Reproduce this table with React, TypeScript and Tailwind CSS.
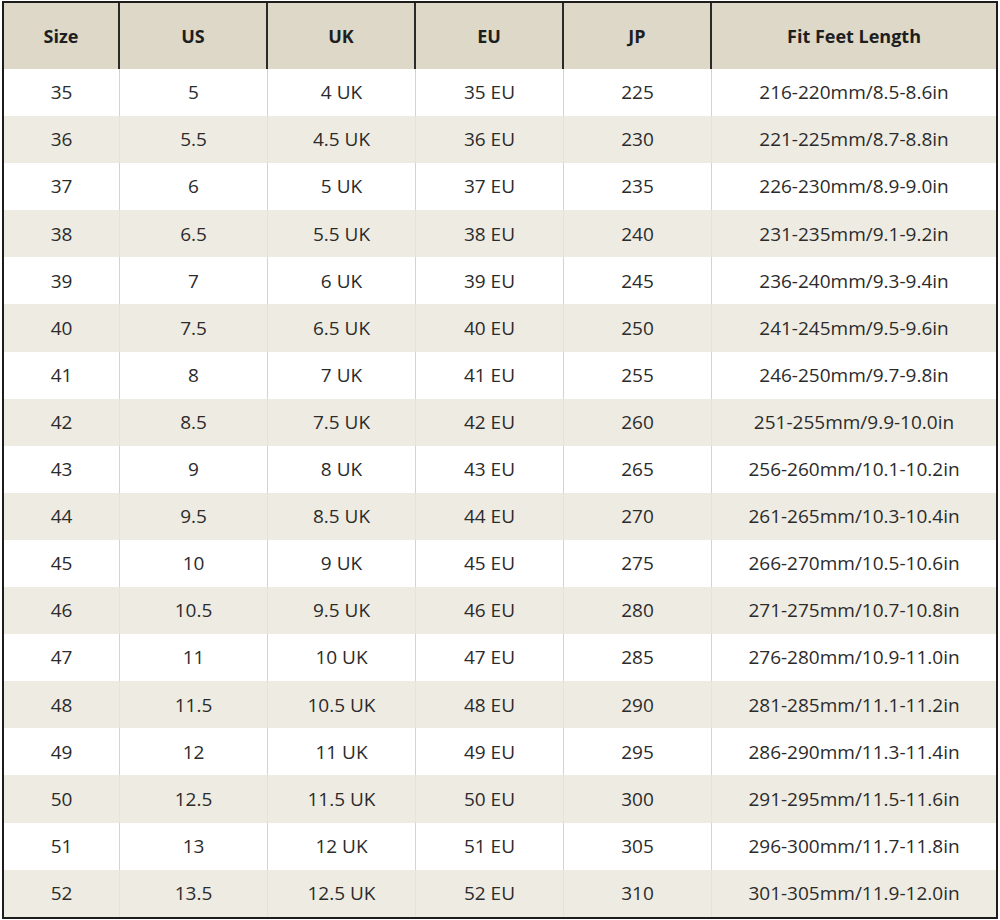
import React from "react";

const rows: string[][] = [
  ["35", "5", "4 UK", "35 EU", "225", "216-220mm/8.5-8.6in"],
  ["36", "5.5", "4.5 UK", "36 EU", "230", "221-225mm/8.7-8.8in"],
  ["37", "6", "5 UK", "37 EU", "235", "226-230mm/8.9-9.0in"],
  ["38", "6.5", "5.5 UK", "38 EU", "240", "231-235mm/9.1-9.2in"],
  ["39", "7", "6 UK", "39 EU", "245", "236-240mm/9.3-9.4in"],
  ["40", "7.5", "6.5 UK", "40 EU", "250", "241-245mm/9.5-9.6in"],
  ["41", "8", "7 UK", "41 EU", "255", "246-250mm/9.7-9.8in"],
  ["42", "8.5", "7.5 UK", "42 EU", "260", "251-255mm/9.9-10.0in"],
  ["43", "9", "8 UK", "43 EU", "265", "256-260mm/10.1-10.2in"],
  ["44", "9.5", "8.5 UK", "44 EU", "270", "261-265mm/10.3-10.4in"],
  ["45", "10", "9 UK", "45 EU", "275", "266-270mm/10.5-10.6in"],
  ["46", "10.5", "9.5 UK", "46 EU", "280", "271-275mm/10.7-10.8in"],
  ["47", "11", "10 UK", "47 EU", "285", "276-280mm/10.9-11.0in"],
  ["48", "11.5", "10.5 UK", "48 EU", "290", "281-285mm/11.1-11.2in"],
  ["49", "12", "11 UK", "49 EU", "295", "286-290mm/11.3-11.4in"],
  ["50", "12.5", "11.5 UK", "50 EU", "300", "291-295mm/11.5-11.6in"],
  ["51", "13", "12 UK", "51 EU", "305", "296-300mm/11.7-11.8in"],
  ["52", "13.5", "12.5 UK", "52 EU", "310", "301-305mm/11.9-12.0in"],
];

const headers = ["Size", "US", "UK", "EU", "JP", "Fit Feet Length"];

const cols = "grid grid-cols-[116px_148px_148px_148px_148px_1fr]";

export default function App() {
  return (
    <div className="w-[1000px] h-[920px] bg-white pt-[1px] pl-[2px] font-['Open_Sans',sans-serif]">
      <div className="w-[996px] border-2 border-[#1c1c1c]">
        {/* header */}
        <div className={`${cols} h-[66px] bg-[#ddd8c8]`}>
          {headers.map((h, i) => (
            <div
              key={h}
              className={
                "flex items-center justify-center text-[18px] font-bold text-[#1e1e1e] " +
                (i < headers.length - 1 ? "border-r-2 border-[#2a2a2a]" : "")
              }
            >
              {h}
            </div>
          ))}
        </div>
        {/* body */}
        {rows.map((r, ri) => {
          const striped = ri % 2 === 1;
          return (
            <div
              key={r[0]}
              className={`${cols} h-[47.1px] ${striped ? "bg-[#eeebe3]" : "bg-white"}`}
            >
              {r.map((c, ci) => (
                <div
                  key={ci}
                  className={
                    "flex items-center justify-center text-[19px] text-[#2b2b2b] " +
                    (ci < r.length - 1
                      ? striped
                        ? "border-r border-[#e6e3da]"
                        : "border-r border-[#d3d3d3]"
                      : "")
                  }
                >
                  {c}
                </div>
              ))}
            </div>
          );
        })}
      </div>
    </div>
  );
}
